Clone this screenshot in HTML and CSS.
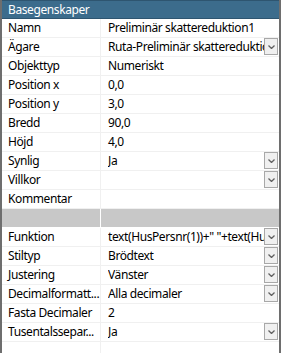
FILE: index.html
```html
<!DOCTYPE html>
<html lang="sv">
<head>
    <meta charset="UTF-8">
    <title>Basegenskaper</title>
    <link rel="stylesheet" href="styles.css">
</head>
<body>
    <div class="panel">
        <div class="panel-title">Basegenskaper</div>

        <div class="grid">
            <div class="name">Namn</div>
            <div class="value">Preliminär skattereduktion1</div>

            <div class="name">Ägare</div>
            <div class="value drop"><span>Ruta-Preliminär skattereduktion</span><i class="btn"></i></div>

            <div class="name">Objekttyp</div>
            <div class="value">Numeriskt</div>

            <div class="name">Position x</div>
            <div class="value">0,0</div>

            <div class="name">Position y</div>
            <div class="value">3,0</div>

            <div class="name">Bredd</div>
            <div class="value">90,0</div>

            <div class="name">Höjd</div>
            <div class="value">4,0</div>

            <div class="name">Synlig</div>
            <div class="value drop"><span>Ja</span><i class="btn"></i></div>

            <div class="name">Villkor</div>
            <div class="value drop"><span></span><i class="btn"></i></div>

            <div class="name">Kommentar</div>
            <div class="value"></div>

            <div class="name gap"></div>
            <div class="value gap"></div>

            <div class="name">Funktion</div>
            <div class="value drop"><span>text(HusPersnr(1))+" "+text(HusPersnr(2))</span><i class="btn"></i></div>

            <div class="name">Stiltyp</div>
            <div class="value drop"><span>Brödtext</span><i class="btn"></i></div>

            <div class="name">Justering</div>
            <div class="value drop"><span>Vänster</span><i class="btn"></i></div>

            <div class="name">Decimalformatt...</div>
            <div class="value drop"><span>Alla decimaler</span><i class="btn"></i></div>

            <div class="name">Fasta Decimaler</div>
            <div class="value">2</div>

            <div class="name">Tusentalssepar...</div>
            <div class="value drop"><span>Ja</span><i class="btn"></i></div>

            <div class="name"></div>
            <div class="value"></div>
        </div>
    </div>
</body>
</html>
```

FILE: styles.css
```css
/* Reset */
* {
    margin: 0;
    padding: 0;
    box-sizing: border-box;
}

body {
    width: 281px;
    height: 353px;
    overflow: hidden;
    background: #fff;
    font-family: 'Noto Sans', 'Open Sans', sans-serif;
    font-size: 12px;
    letter-spacing: -0.4px;
    color: #000;
}

.panel {
    width: 281px;
    height: 353px;
    border-left: 2px solid #6e6e6e;
    border-right: 2px solid #6e6e6e;
    overflow: hidden;
}

.panel-title {
    height: 19px;
    line-height: 18px;
    padding-left: 7px;
    margin: 0 -2px;
    background: #3c6c8c;
    border: 1px solid #2e5570;
    color: #fff;
}

.grid {
    display: grid;
    grid-template-columns: 99px 1fr;
    grid-auto-rows: 19px;
}

.name,
.value {
    height: 19px;
    line-height: 18px;
    border-bottom: 1px solid #f0f0f0;
    white-space: nowrap;
    overflow: hidden;
}

.name {
    padding-left: 6px;
    border-right: 1px solid #f0f0f0;
}

.value {
    padding-left: 7px;
}

.gap {
    background: #c8c8c8;
    border-bottom-color: #fff;
}

.name.gap {
    border-right-color: #fff;
}

.drop {
    display: flex;
    padding-right: 1px;
}

.drop span {
    flex: 1;
    overflow: hidden;
    white-space: nowrap;
}

.btn {
    width: 14px;
    height: 17px;
    border: 1px solid #a8a8a8;
    background: #f0f0f0 url("data:image/svg+xml,%3Csvg xmlns='http://www.w3.org/2000/svg' width='7' height='4'%3E%3Cpath d='M0.5 0.5 L3.5 3.5 L6.5 0.5' fill='none' stroke='%23606060' stroke-width='1.3'/%3E%3C/svg%3E") no-repeat center;
}
```
